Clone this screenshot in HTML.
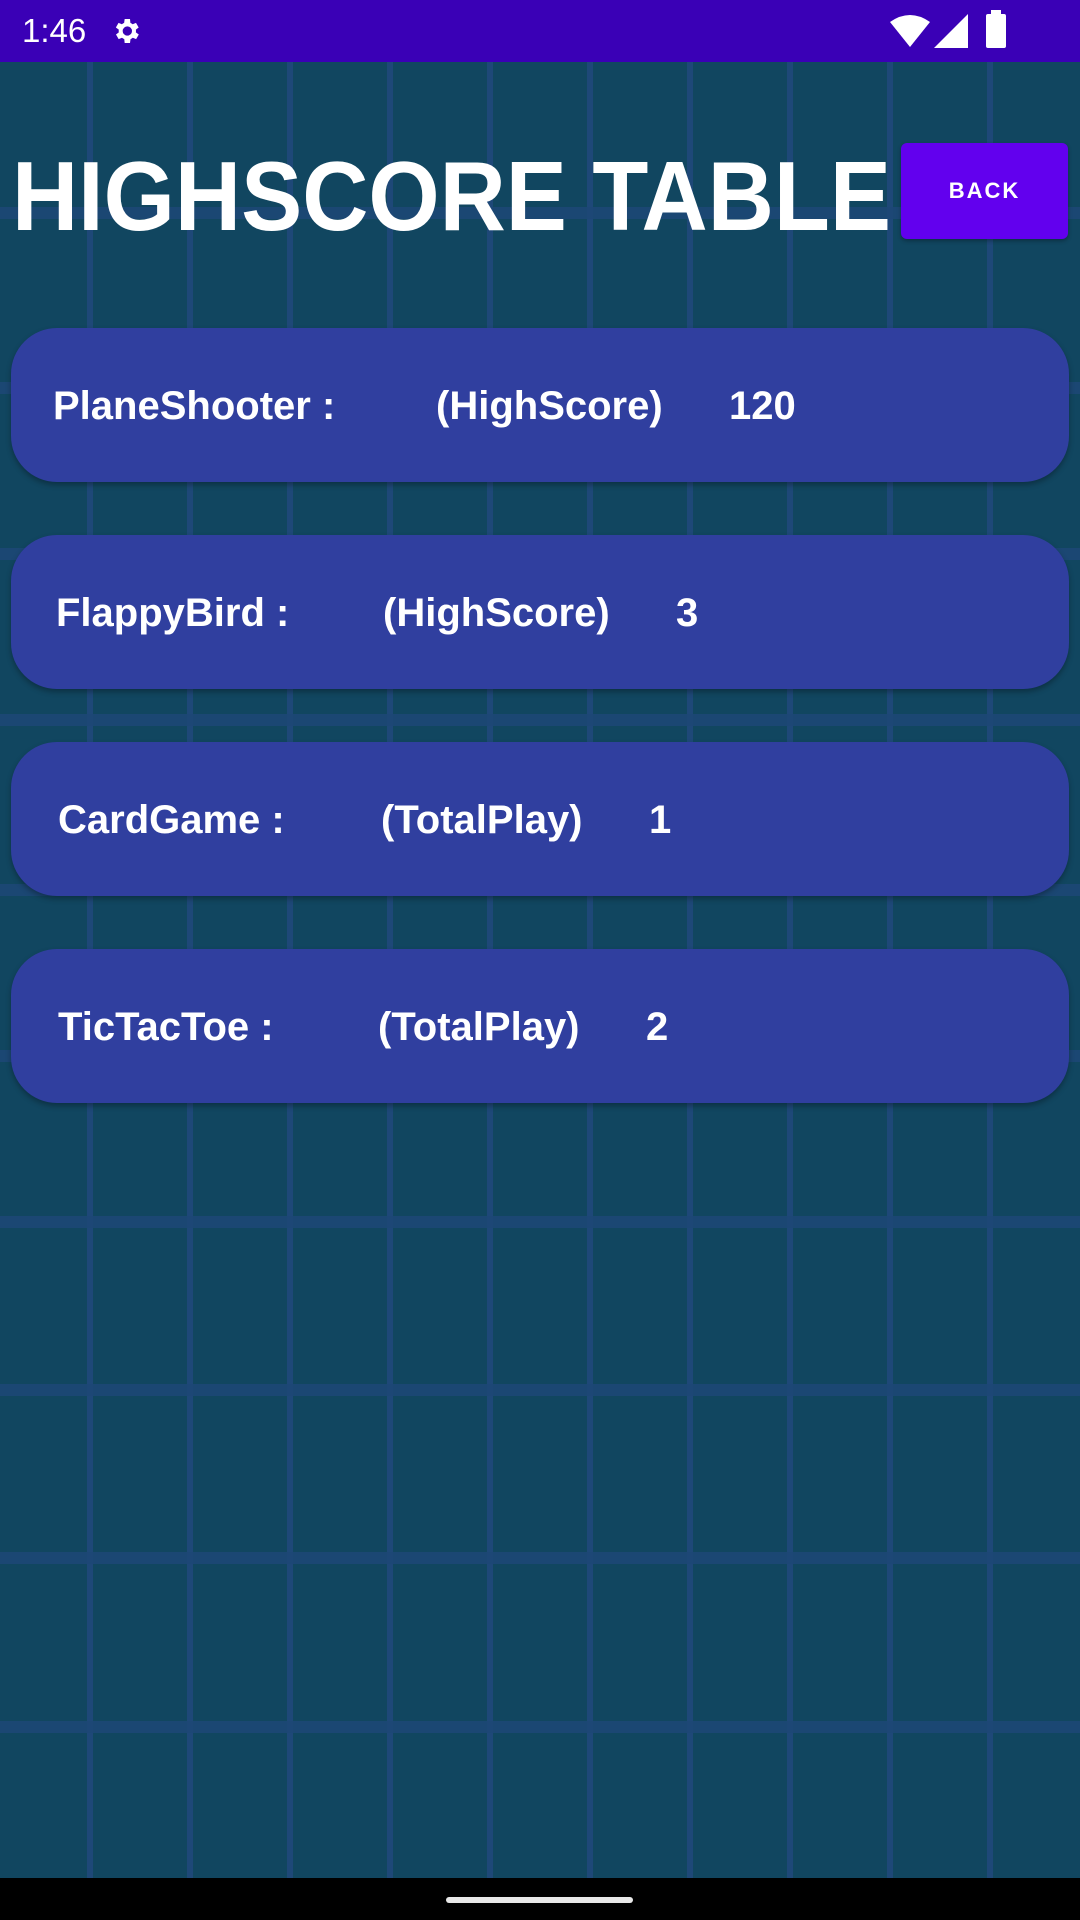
<!DOCTYPE html>
<html><head><meta charset="utf-8"><style>
*{margin:0;padding:0;box-sizing:border-box}
body{width:1080px;height:1920px;overflow:hidden;position:relative;background:#114660;font-family:"Liberation Sans",sans-serif;color:#fff}
.v{position:absolute;top:62px;height:1816px;width:6px;background:#1e4878}
.h{position:absolute;left:0;width:1080px;height:12px;background:#1d4776;opacity:.9}
.sb{position:absolute;top:0;left:0;width:1080px;height:62px;background:#3a00b6}
.title{position:absolute;left:12px;top:138px;font-size:98px;font-weight:bold;white-space:nowrap;transform:scaleX(0.935);transform-origin:left top;line-height:1.2}
.back{position:absolute;left:901px;top:143px;width:167px;height:96px;background:#6200ee;border-radius:6px;font-weight:bold;font-size:22px;letter-spacing:2px;text-align:center;line-height:96px;box-shadow:0 2px 4px rgba(0,0,0,.3)}
.card{position:absolute;left:11px;width:1058px;height:154px;background:#303f9f;border-radius:46px;box-shadow:0 3px 6px rgba(0,0,0,.3)}
.card span{position:absolute;top:55px;font-size:40px;font-weight:bold;white-space:nowrap;line-height:46px}
.nav{position:absolute;left:0;top:1878px;width:1080px;height:42px;background:#000}
.pill{position:absolute;left:446px;top:1897px;width:187px;height:6px;border-radius:3px;background:#e8e8e8}
</style></head><body>
<div class="v" style="left:87px"></div><div class="v" style="left:187px"></div><div class="v" style="left:287px"></div><div class="v" style="left:387px"></div><div class="v" style="left:487px"></div><div class="v" style="left:587px"></div><div class="v" style="left:687px"></div><div class="v" style="left:787px"></div><div class="v" style="left:887px"></div><div class="v" style="left:987px"></div>
<div class="h" style="top:207px"></div><div class="h" style="top:382px"></div><div class="h" style="top:548px"></div><div class="h" style="top:714px"></div><div class="h" style="top:884px"></div><div class="h" style="top:1050px"></div><div class="h" style="top:1216px"></div><div class="h" style="top:1384px"></div><div class="h" style="top:1552px"></div><div class="h" style="top:1721px"></div>
<div class="sb">
<div style="position:absolute;left:22px;top:12px;font-size:33px">1:46</div>
<svg style="position:absolute;left:110px;top:15px" width="32" height="32" viewBox="0 0 24 24"><path fill="#fff" d="M19.4 13a7.5 7.5 0 0 0 0-2l2.1-1.6-2-3.5-2.5 1a7 7 0 0 0-1.700-1L15 3h-4l-.4 2.9a7 7 0 0 0-1.7 1l-2.5-1-2 3.5L6.6 11a7.5 7.5 0 0 0 0 2l-2.1 1.6 2 3.5 2.5-1a7 7 0 0 0 1.7 1L11 21h4l.4-2.9a7 7 0 0 0 1.7-1l2.5 1 2-3.5zM13 15.5a3.5 3.5 0 1 1 0-7 3.5 3.5 0 0 1 0 7z"/></svg>
<svg style="position:absolute;left:890px;top:14px" width="40" height="34" viewBox="0 0 40 34"><path fill="#fff" d="M0 8Q20-6 40 8L20 33z"/></svg>
<svg style="position:absolute;left:934px;top:14px" width="34" height="34" viewBox="0 0 34 34"><path fill="#fff" d="M34 0V34H0z"/></svg>
<div style="position:absolute;left:986px;top:14px;width:20px;height:34px;background:#fff;border-radius:2px"></div>
<div style="position:absolute;left:991px;top:10px;width:10px;height:5px;background:#fff"></div>
</div>
<div class="title">HIGHSCORE TABLE</div>
<div class="back">BACK</div>
<div class="card" style="top:328px"><span style="left:42px">PlaneShooter :</span><span style="left:425px">(HighScore)</span><span style="left:718px">120</span></div>
<div class="card" style="top:535px"><span style="left:45px">FlappyBird :</span><span style="left:372px">(HighScore)</span><span style="left:665px">3</span></div>
<div class="card" style="top:742px"><span style="left:47px">CardGame :</span><span style="left:370px">(TotalPlay)</span><span style="left:638px">1</span></div>
<div class="card" style="top:949px"><span style="left:47px">TicTacToe :</span><span style="left:367px">(TotalPlay)</span><span style="left:635px">2</span></div>
<div class="nav"></div><div class="pill"></div>
</body></html>
